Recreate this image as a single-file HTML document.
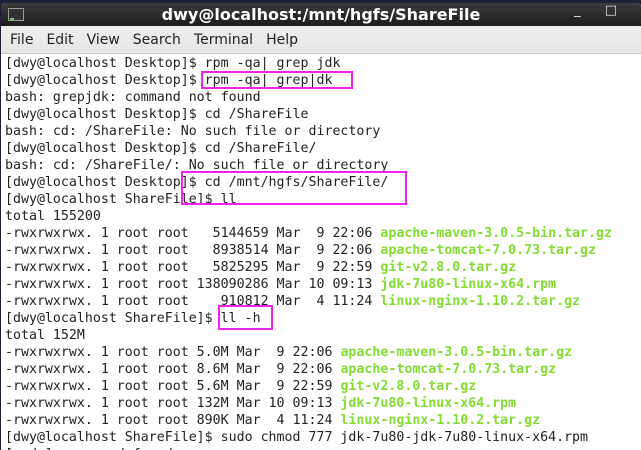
<!DOCTYPE html>
<html><head><meta charset="utf-8"><style>
html,body{margin:0;padding:0;width:641px;height:450px;overflow:hidden;background:#1a2233;position:relative}
.win{position:absolute;left:1px;top:3px;width:640px;height:450px;background:#fff;border-radius:4px 4px 0 0;overflow:hidden}
.title{position:absolute;left:0;top:0;width:100%;height:23px;background:linear-gradient(#3c3c3c,#1c1c1c);color:#fff;font:bold 16px "DejaVu Sans",sans-serif;text-align:center;line-height:23px}
.icon{position:absolute;left:7px;top:5px;width:16px;height:13px;background:#333;border:1px solid #999;box-sizing:border-box}
.icon:after{content:"";position:absolute;left:1px;bottom:0;width:4px;height:2px;background:#6c6}
.ctl{position:absolute;right:14px;top:0;color:#ddd;font:13px "DejaVu Sans",sans-serif;letter-spacing:10px}
.menu{position:absolute;left:0;top:23px;width:100%;height:27px;background:linear-gradient(#f0efee,#e6e5e3);border-bottom:1px solid #c8c8c8;font:14px "DejaVu Sans",sans-serif;line-height:28px;color:#222}
.menu span{margin-left:9px;margin-right:4px}
pre{position:absolute;left:5px;top:55px;margin:0;font:13.28px "DejaVu Sans Mono",monospace;line-height:17px;color:#222}
.g{color:#82dc32;font-weight:bold}
.box{position:absolute;border:2px solid #ee22ee}
</style></head><body><div class="win">
<div class="title"><div class="icon"></div>dwy@localhost:/mnt/hgfs/ShareFile<span class="ctl">_ □</span></div>
<div class="menu"><span>File</span><span>Edit</span><span>View</span><span>Search</span><span>Terminal</span><span>Help</span></div>
</div>
<pre>[dwy@localhost Desktop]$ rpm -qa| grep jdk
[dwy@localhost Desktop]$ rpm -qa| grep|dk
bash: grepjdk: command not found
[dwy@localhost Desktop]$ cd /ShareFile
bash: cd: /ShareFile: No such file or directory
[dwy@localhost Desktop]$ cd /ShareFile/
bash: cd: /ShareFile/: No such file or directory
[dwy@localhost Desktop]$ cd /mnt/hgfs/ShareFile/
[dwy@localhost ShareFile]$ ll
total 155200
-rwxrwxrwx. 1 root root   5144659 Mar  9 22:06 <span class="g">apache-maven-3.0.5-bin.tar.gz</span>
-rwxrwxrwx. 1 root root   8938514 Mar  9 22:06 <span class="g">apache-tomcat-7.0.73.tar.gz</span>
-rwxrwxrwx. 1 root root   5825295 Mar  9 22:59 <span class="g">git-v2.8.0.tar.gz</span>
-rwxrwxrwx. 1 root root 138090286 Mar 10 09:13 <span class="g">jdk-7u80-linux-x64.rpm</span>
-rwxrwxrwx. 1 root root    910812 Mar  4 11:24 <span class="g">linux-nginx-1.10.2.tar.gz</span>
[dwy@localhost ShareFile]$ ll -h
total 152M
-rwxrwxrwx. 1 root root 5.0M Mar  9 22:06 <span class="g">apache-maven-3.0.5-bin.tar.gz</span>
-rwxrwxrwx. 1 root root 8.6M Mar  9 22:06 <span class="g">apache-tomcat-7.0.73.tar.gz</span>
-rwxrwxrwx. 1 root root 5.6M Mar  9 22:59 <span class="g">git-v2.8.0.tar.gz</span>
-rwxrwxrwx. 1 root root 132M Mar 10 09:13 <span class="g">jdk-7u80-linux-x64.rpm</span>
-rwxrwxrwx. 1 root root 890K Mar  4 11:24 <span class="g">linux-nginx-1.10.2.tar.gz</span>
[dwy@localhost ShareFile]$ sudo chmod 777 jdk-7u80-jdk-7u80-linux-x64.rpm
[sudo] password for dwy:</pre>
<div class="box" style="left:201px;top:71px;width:148px;height:14px"></div>
<div class="box" style="left:181px;top:171px;width:222px;height:30px"></div>
<div class="box" style="left:218px;top:305px;width:51px;height:21px"></div>
</body></html>
